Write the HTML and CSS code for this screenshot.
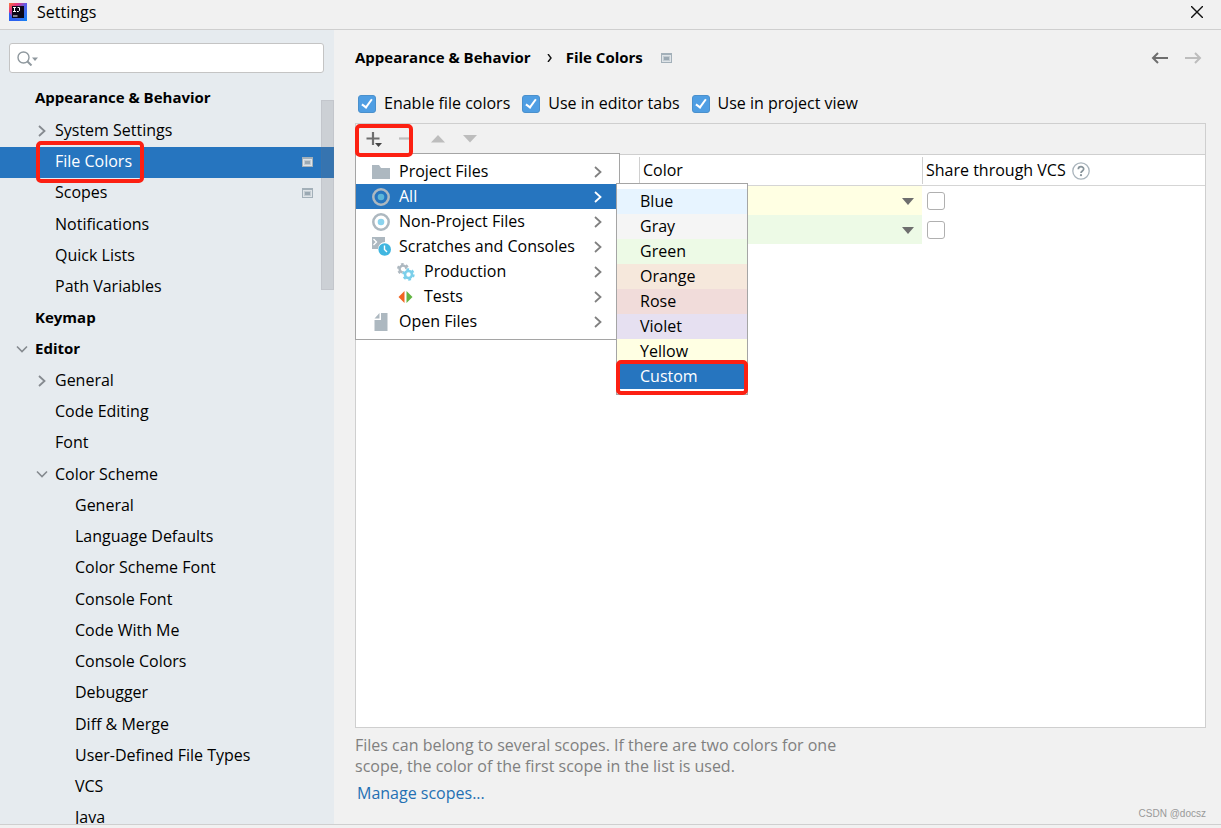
FILE: index.html
```html
<!DOCTYPE html>
<html lang="en">
<head>
<meta charset="utf-8">
<title>Settings</title>
<link rel="stylesheet" href="styles.css">
</head>
<body>
<svg class="defs" aria-hidden="true">
  <symbol id="chev-right" viewBox="0 0 12 12"><path d="M3 1l5.500 5L3 11" fill="none" stroke="currentColor" stroke-width="1.800"/></symbol>
  <symbol id="chev-down" viewBox="0 0 12 12"><path d="M1 3.500l5 5 5-5" fill="none" stroke="currentColor" stroke-width="1.600"/></symbol>
  <symbol id="project" viewBox="0 0 11 10"><path d="M0 0h11v10H0z" fill="#a3b0b9"/><path d="M1 2h9v7H1z" fill="#dfe4e8"/><path d="M2 3h7v5H2z" fill="#c3ccd2"/><path d="M3 4h5v3H3z" fill="#9ba9b3"/></symbol>
  <symbol id="tri-down" viewBox="0 0 12 7"><path d="M0 0h12L6 7z" fill="currentColor"/></symbol>
  <symbol id="target" viewBox="0 0 18 18"><circle cx="9" cy="9" r="7.700" fill="none" stroke="#adb8c0" stroke-width="2.500"/><circle cx="9" cy="9" r="3.300" fill="currentColor"/></symbol>
</svg>
<header class="titlebar">
  <svg class="logo" viewBox="0 0 18 18" aria-hidden="true">
    <defs>
      <linearGradient id="lg" x1="0" y1="0" x2="1" y2="1"><stop offset="0" stop-color="#f97a3d"/><stop offset=".25" stop-color="#e8337a"/><stop offset=".5" stop-color="#5b5de8"/><stop offset="1" stop-color="#0c83f5"/></linearGradient>
    </defs>
    <path d="M0 0h18v18H0z" fill="url(#lg)"/>
    <path d="M0 9v9h12L3 14z" fill="#2a62f0"/>
    <path d="M3 3h12v12H3z" fill="#0b0716"/>
    <path d="M4 4.500h3M5.500 4.500v4M4 8.500h3M8.500 4.500h2v3l-1 1H8M4 13h4.500" fill="none" stroke="#fff" stroke-width="1"/>
  </svg>
  <h1 class="title">Settings</h1>
  <button class="icon-btn close" aria-label="Close"><svg viewBox="0 0 12 12"><path d="M0 0l12 12M12 0L0 12" stroke="#111" stroke-width="1.400"/></svg></button>
</header>
<div class="body">
  <nav class="sidebar" aria-label="Settings categories">
    <div class="search">
      <svg viewBox="0 0 21 15" aria-hidden="true"><circle cx="6.500" cy="6.500" r="5.500" fill="none" stroke="#8f989e" stroke-width="1.400"/><path d="M10.500 10.500l4 4" stroke="#8f989e" stroke-width="2"/><path d="M15 6.500h6l-3 3.500z" fill="#8f989e"/></svg>
      <input class="search-input" type="text" aria-label="Search settings">
    </div>
    <div class="tree-wrap">
      <ul class="tree">
        <li><a href="#" class="row top header-row">Appearance &amp; Behavior</a>
          <ul>
            <li><a href="#" class="row sub"><svg class="chev"><use href="#chev-right"/></svg>System Settings</a></li>
            <li><a href="#" class="row sub selected" aria-current="page"><span class="mark mark-tree"></span>File Colors<svg class="proj"><use href="#project"/></svg></a></li>
            <li><a href="#" class="row sub">Scopes<svg class="proj"><use href="#project"/></svg></a></li>
            <li><a href="#" class="row sub">Notifications</a></li>
            <li><a href="#" class="row sub">Quick Lists</a></li>
            <li><a href="#" class="row sub">Path Variables</a></li>
          </ul>
        </li>
        <li><a href="#" class="row top">Keymap</a></li>
        <li><a href="#" class="row top"><svg class="chev"><use href="#chev-down"/></svg>Editor</a>
          <ul class="spaced">
            <li><a href="#" class="row sub"><svg class="chev"><use href="#chev-right"/></svg>General</a></li>
            <li><a href="#" class="row sub">Code Editing</a></li>
            <li><a href="#" class="row sub">Font</a></li>
            <li><a href="#" class="row sub"><svg class="chev"><use href="#chev-down"/></svg>Color Scheme</a>
              <ul>
                <li><a href="#" class="row leaf">General</a></li>
                <li><a href="#" class="row leaf">Language Defaults</a></li>
                <li><a href="#" class="row leaf">Color Scheme Font</a></li>
                <li><a href="#" class="row leaf">Console Font</a></li>
                <li><a href="#" class="row leaf">Code With Me</a></li>
                <li><a href="#" class="row leaf">Console Colors</a></li>
                <li><a href="#" class="row leaf">Debugger</a></li>
                <li><a href="#" class="row leaf">Diff &amp; Merge</a></li>
                <li><a href="#" class="row leaf">User-Defined File Types</a></li>
                <li><a href="#" class="row leaf">VCS</a></li>
                <li><a href="#" class="row leaf">Java</a></li>
              </ul>
            </li>
          </ul>
        </li>
      </ul>
      <span class="thumb"></span>
    </div>
  </nav>
  <main class="content">
    <div class="crumbs">
      <span>Appearance &amp; Behavior</span>
      <svg class="crumb-sep" viewBox="0 0 5 8" aria-hidden="true"><path d="M1 0l3 4-3 4" fill="none" stroke="#111" stroke-width="1.400"/></svg>
      <h2 class="crumb-title">File Colors</h2>
      <svg class="crumb-proj"><use href="#project"/></svg>
      <div class="history">
        <button class="icon-btn back" aria-label="Back"><svg viewBox="0 0 17 12"><path d="M17 6H2M7 1L2 6l5 5" fill="none" stroke="currentColor" stroke-width="2"/></svg></button>
        <button class="icon-btn forward" aria-label="Forward" disabled><svg viewBox="0 0 17 12"><path d="M0 6h15M10 1l5 5-5 5" fill="none" stroke="currentColor" stroke-width="2"/></svg></button>
      </div>
    </div>
    <div class="options">
      <label class="option"><input type="checkbox" class="check" checked>Enable file colors</label>
      <label class="option"><input type="checkbox" class="check" checked>Use in editor tabs</label>
      <label class="option"><input type="checkbox" class="check" checked>Use in project view</label>
    </div>
    <section class="panel">
      <div class="toolbar">
        <button class="tool" aria-label="Add"><svg viewBox="0 0 18 18"><path d="M8 2v13M1.500 8.500h13" stroke="#6e6e6e" stroke-width="2.200"/><path d="M10 13h7l-3.500 4z" fill="#444"/></svg></button>
        <button class="tool" aria-label="Remove" disabled><svg viewBox="0 0 18 18"><path d="M2 8.500h13" stroke="#bdbdbd" stroke-width="2.200"/></svg></button>
        <button class="tool" aria-label="Move up" disabled><svg viewBox="0 0 18 18"><path d="M2 12.500h14L9 5z" fill="#bdbdbd"/></svg></button>
        <button class="tool" aria-label="Move down" disabled><svg viewBox="0 0 18 18"><path d="M2 5h14l-7 7.500z" fill="#bdbdbd"/></svg></button>
        <ul class="menu scopes" role="menu">
          <li><button class="item" role="menuitem"><svg class="ico" viewBox="0 0 18 18"><path d="M0 2h7l2 3h9v11H0z" fill="#adb8c0"/></svg>Project Files<svg class="more"><use href="#chev-right"/></svg></button></li>
          <li class="open"><button class="item active" role="menuitem"><svg class="ico all"><use href="#target"/></svg>All<svg class="more"><use href="#chev-right"/></svg></button>
            <ul class="menu colors" role="menu">
              <li><button class="item blue" role="menuitem">Blue</button></li>
              <li><button class="item gray" role="menuitem">Gray</button></li>
              <li><button class="item green" role="menuitem">Green</button></li>
              <li><button class="item orange" role="menuitem">Orange</button></li>
              <li><button class="item rose" role="menuitem">Rose</button></li>
              <li><button class="item violet" role="menuitem">Violet</button></li>
              <li><button class="item yellow" role="menuitem">Yellow</button></li>
              <li class="open"><button class="item active" role="menuitem">Custom</button><span class="mark mark-custom"></span></li>
            </ul>
          </li>
          <li><button class="item" role="menuitem"><svg class="ico non"><use href="#target"/></svg>Non-Project Files<svg class="more"><use href="#chev-right"/></svg></button></li>
          <li><button class="item" role="menuitem"><svg class="ico wide" viewBox="0 0 19 19"><path d="M0 0h13v5a7 7 0 0 0-7 7H0z" fill="#adb8c0"/><path d="M1.500 2l3 3-3 3" fill="none" stroke="#fff" stroke-width="1.300"/><circle cx="12.700" cy="12.500" r="6.300" fill="#40b6e0"/><path d="M12.500 8.500v4l2.500 2.500" fill="none" stroke="#fff" stroke-width="1.400"/></svg>Scratches and Consoles<svg class="more"><use href="#chev-right"/></svg></button></li>
          <li><button class="item nested" role="menuitem"><svg class="ico" viewBox="0 0 18 18"><circle cx="6" cy="6" r="3.400" fill="none" stroke="#adb8c0" stroke-width="2.400"/><circle cx="6" cy="6" r="5" fill="none" stroke="#adb8c0" stroke-width="2" stroke-dasharray="2.600 2.636"/><circle cx="11.500" cy="11.500" r="6.200" fill="#fff"/><circle cx="11.500" cy="11.500" r="3.500" fill="none" stroke="#7bcfea" stroke-width="2.600"/><circle cx="11.500" cy="11.500" r="5.200" fill="none" stroke="#7bcfea" stroke-width="2" stroke-dasharray="2.700 2.745"/></svg>Production<svg class="more"><use href="#chev-right"/></svg></button></li>
          <li><button class="item nested" role="menuitem"><svg class="ico" viewBox="0 0 18 18"><path d="M7.500 3v12L1.500 9z" fill="#f26522"/><path d="M9.500 3v12l6-6z" fill="#62b543"/></svg>Tests<svg class="more"><use href="#chev-right"/></svg></button></li>
          <li><button class="item" role="menuitem"><svg class="ico" viewBox="0 0 18 18"><path d="M9 0h6.500v18H2.500V7H9z" fill="#adb8c0"/><path d="M7.500 0v5.500H2.500z" fill="#adb8c0"/></svg>Open Files<svg class="more"><use href="#chev-right"/></svg></button></li>
        </ul>
        <span class="mark mark-tool"></span>
      </div>
      <table class="table">
        <thead>
          <tr><th scope="col" aria-label="Scope"></th><th scope="col"><div class="head">Color</div></th><th scope="col"><div class="head">Share through VCS <svg class="help" viewBox="0 0 18 18" aria-hidden="true"><circle cx="9" cy="9" r="8.200" fill="none" stroke="#a9b4bc" stroke-width="1.300"/><path d="M6.300 7.200C6.300 3.900 11.700 3.900 11.700 7.100 11.700 9 9 9 9 11" fill="none" stroke="#87939a" stroke-width="1.700"/><circle cx="9" cy="13.200" r="1.100" fill="#87939a"/></svg></div></th></tr>
        </thead>
        <tbody>
          <tr><td></td><td><div class="picker yellow"><select class="select" aria-label="Color"><option>Yellow</option></select><svg class="arrow"><use href="#tri-down"/></svg></div></td><td class="share"><input type="checkbox" class="check" aria-label="Share through VCS"></td></tr>
          <tr><td></td><td><div class="picker green"><select class="select" aria-label="Color"><option>Green</option></select><svg class="arrow"><use href="#tri-down"/></svg></div></td><td class="share"><input type="checkbox" class="check" aria-label="Share through VCS"></td></tr>
        </tbody>
      </table>
    </section>
    <p class="note">Files can belong to several scopes. If there are two colors for one scope, the color of the first scope in the list is used.</p>
    <a href="#" class="link">Manage scopes...</a>
    <span class="credit">CSDN @docsz</span>
  </main>
</div>
<footer class="footer"></footer>
</body>
</html>
```
FILE: styles.css
```css
* { box-sizing: border-box; }
body {
  margin: 0;
  height: 100vh;
  display: flex;
  flex-direction: column;
  overflow: hidden;
  background: #f1f1f1;
  color: #000;
  font: 16px/21px "Open Sans", "Noto Sans", sans-serif;
}
ul { list-style: none; margin: 0; padding: 0; }
button, input, select { font: inherit; color: inherit; }
svg { display: block; flex: none; }
.defs { position: absolute; width: 0; height: 0; }

.titlebar {
  display: flex;
  align-items: center;
  height: 30px;
  padding: 0 18px 5px 9px;
  border-bottom: 1px solid #cfcfcf;
}
.logo { width: 18px; height: 18px; }
.title { margin: 0 0 0 10px; font-size: 16px; font-weight: 400; }
.icon-btn { padding: 0; border: 0; background: none; }
.close { margin-left: auto; }
.close svg { width: 12px; height: 12px; }

.body { flex: 1; display: flex; min-height: 0; }
.footer { height: 4px; border-top: 1px solid #cfcfcf; }

.sidebar {
  width: 334px;
  flex: none;
  display: flex;
  flex-direction: column;
  background: #e6ebef;
}
.search {
  display: flex;
  align-items: center;
  height: 30px;
  margin: 13px 10px 10px 9px;
  padding: 0 7px;
  background: #fff;
  border: 1px solid #c4c4c4;
  border-radius: 3px;
}
.search svg { width: 21px; height: 15px; }
.search-input { flex: 1; min-width: 0; border: 0; outline: 0; background: none; }
.tree-wrap { position: relative; flex: 1; min-height: 0; overflow: hidden; }
.row {
  position: relative;
  display: flex;
  align-items: center;
  height: 31px;
  padding-right: 21px;
  padding-bottom: 2px;
  color: #000;
  text-decoration: none;
}
/* row pitch averages a little over 31px */
li:nth-child(4n) > .row { height: 32px; }
.header-row { margin-bottom: 2px; }
.spaced { padding-top: 1px; }
.top { padding-left: 35px; font-size: 15px; font-weight: 700; }
.sub { padding-left: 55px; }
.leaf { padding-left: 75px; }
.selected { background: #2675bf; color: #fff; }
.chev { width: 12px; height: 12px; margin-left: -19px; margin-right: 7px; color: #858a8f; }
.proj { width: 11px; height: 10px; margin-left: auto; }
.thumb {
  position: absolute;
  top: 17px;
  right: 0;
  width: 13px;
  height: 190px;
  background: rgba(115, 115, 125, .22);
  border: 1px solid rgba(115, 115, 125, .1);
}

.mark { position: absolute; border: 4px solid #fc2012; border-radius: 5px; pointer-events: none; }
.mark-tree { left: 36px; top: -6px; width: 108px; height: 42px; }
.mark-tool { left: -1px; top: 0; width: 58px; height: 33px; z-index: 4; }
.mark-custom { inset: -4px -1px -6px; }

.content {
  position: relative;
  flex: 1;
  min-width: 0;
  display: flex;
  flex-direction: column;
  padding: 17px 15px 20px 21px;
}
.crumbs { display: flex; align-items: center; font-size: 15px; font-weight: 700; }
.crumb-sep { width: 5px; height: 8px; margin: 0 14px 0 16px; }
.crumb-title { margin: 0; font-size: 15px; }
.crumb-proj { width: 11px; height: 10px; margin-left: 18px; }
.history { display: flex; gap: 17px; margin-left: auto; padding-right: 4px; }
.history svg { width: 17px; height: 12px; }
.back { color: #6e6e6e; }
.forward { color: #bdbdbd; }

.options { display: flex; gap: 12px; margin: 25px 0 9px 3px; }
.option { display: flex; align-items: center; gap: 8px; }
.check {
  appearance: none;
  display: block;
  width: 18px;
  height: 18px;
  margin: 0;
  border: 1px solid #b0b0b0;
  border-radius: 3px;
  background: #fff;
}
.check:checked {
  display: flex;
  justify-content: center;
  background: #4f9ee3;
  border-color: #4a90cc;
}
.check:checked::after {
  content: "";
  width: 4px;
  height: 9px;
  margin-top: 1px;
  border: solid #fff;
  border-width: 0 2px 2px 0;
  transform: rotate(36deg);
}

.panel {
  flex: 1;
  display: flex;
  flex-direction: column;
  background: #fff;
  border: 1px solid #cfcfcf;
}
.toolbar {
  position: relative;
  display: flex;
  align-items: center;
  gap: 14px;
  height: 31px;
  padding-left: 9px;
  background: #f1f1f1;
  border-bottom: 1px solid #cfcfcf;
}
.tool { padding: 0; border: 0; background: none; }
.tool svg { width: 18px; height: 18px; }

.menu { position: absolute; padding: 5px 0; background: #fff; border: 1px solid #a5a5a5; }
.scopes { left: -1px; top: 29px; width: 265px; z-index: 2; }
.colors { left: 260px; top: -1px; width: 132px; z-index: 3; }
.open { position: relative; }
.item {
  display: flex;
  align-items: center;
  width: 100%;
  height: 25px;
  padding: 0 15px 0 16px;
  border: 0;
  background: none;
  text-align: left;
}
.colors .item { padding: 0 23px; }
.scopes .nested { padding-left: 41px; }
.ico { width: 18px; height: 18px; margin-right: 9px; }
.wide { width: 19px; height: 19px; margin-right: 8px; }
.ico.all { color: #5bb5d9; }
.ico.non { color: #8ad3ee; }
.more { width: 12px; height: 12px; margin-left: auto; color: #808080; }
.item.active { background: #2675bf; color: #fff; }
.active .more { color: #fff; }
.blue { background: #e7f4ff; }
.gray { background: #f5f5f5; }
.green { background: #edfae6; }
.orange { background: #f6e8dc; }
.rose { background: #f1dcda; }
.violet { background: #e6e0f1; }
.yellow { background: #ffffe3; }

.table { width: 100%; table-layout: fixed; border-collapse: separate; border-spacing: 0; }
.table th { height: 31px; padding: 2px 0 1px; border-bottom: 1px solid #d5d5d5; font-weight: 400; text-align: left; }
.head { display: flex; align-items: center; gap: 6px; height: 27px; padding-left: 3px; border-left: 1px solid #d0d0d0; }
.help { width: 18px; height: 18px; }
.table td { height: 29px; padding: 0; }
.picker { position: relative; height: 29px; }
.select { appearance: none; width: 100%; height: 100%; padding: 0 4px; border: 0; border-radius: 0; background: none; }
.arrow { position: absolute; right: 8px; top: 12px; width: 12px; height: 7px; color: #6e6e6e; pointer-events: none; }
.table .share { padding-left: 5px; }

.note { max-width: 500px; margin: 7px 0 6px; color: #808080; }
.link { align-self: flex-start; margin-left: 2px; color: #2470b3; text-decoration: none; }
.credit { position: absolute; right: 15px; bottom: 2px; color: #999; font: 10px/16px "Liberation Sans", sans-serif; }
```
